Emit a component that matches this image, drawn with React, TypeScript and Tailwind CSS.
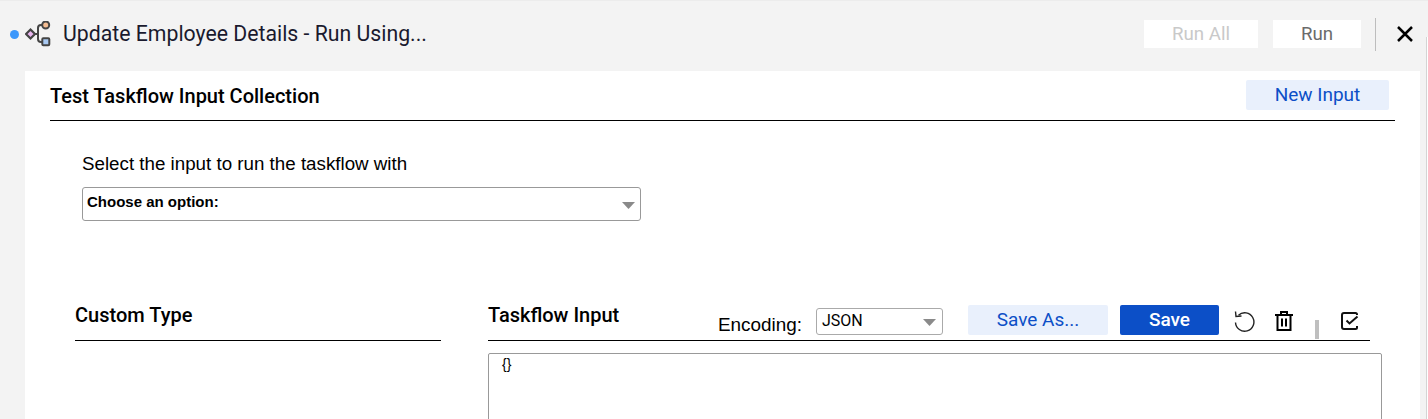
const ROBOTO = "font-['Roboto',sans-serif]"
const ARIAL = "font-['Liberation_Sans',Arial,sans-serif]"

function FlowIcon() {
  return (
    <svg width="26" height="26" viewBox="0 0 26 26" fill="none">
      <path d="M8 13h5M13 13V7q0-3 3-3h2M13 13v5q0 3 3 3h2" stroke="#444" strokeWidth="2" />
      <path d="M5.500 8.500 10 13l-4.500 4.500L1 13z" fill="#eab6f0" stroke="#444" strokeWidth="2.200" />
      <circle cx="20.700" cy="4" r="3.500" fill="#f4bd92" stroke="#444" strokeWidth="2" />
      <rect x="17.300" y="17.300" width="7" height="7" rx="1" fill="#a9c9f2" stroke="#444" strokeWidth="2" />
    </svg>
  )
}

function Caret({ className }: { className: string }) {
  return (
    <svg width="13" height="7" viewBox="0 0 13 7" className={className}>
      <path d="M0 0h13L6.500 7z" fill="#8a8a8a" />
    </svg>
  )
}

function UndoIcon() {
  return (
    <svg width="21" height="21" viewBox="0 0 21 21" fill="none" stroke="#222" strokeWidth="1.400">
      <path d="M4.500 4.200A9.200 9.200 0 1 1 1.500 11.500" />
      <path d="M1.500.5 2 5.500l5.500-.5" />
    </svg>
  )
}

function TrashIcon() {
  return (
    <svg width="18" height="20" viewBox="0 0 18 20" fill="none" stroke="#000" strokeWidth="2">
      <path d="M0 4h18M6 4V1h6v3M2.500 4v15h13V4M7 7.500v8M11 7.500v8" />
    </svg>
  )
}

function CheckBoxIcon() {
  return (
    <svg width="18" height="18" viewBox="0 0 18 18" fill="none" stroke="#111" strokeWidth="2">
      <path d="M16 3V2.500Q16 1 14.500 1H3Q1 1 1 3v12q0 2 2 2h11.500q1.500 0 1.500-1.500V14" />
      <path d="M5.500 8.500l3 3 8-7" />
    </svg>
  )
}

export default function App() {
  return (
    <div className={`relative h-[419px] w-[1428px] overflow-hidden bg-[#f3f3f3] text-black ${ROBOTO}`}>
      {/* top bar */}
      <div className="h-[71px] flex items-center border-t border-[#ececec] pb-[4px] pl-[10px] pr-[15px]">
        <span className="w-[9px] h-[9px] rounded-full bg-[#3b97fb]" />
        <span className="ml-[6px]"><FlowIcon /></span>
        <span className="ml-[12px] text-[21.250px] text-[#1a1a2e]">Update Employee Details - Run Using...</span>
        <div className="ml-auto flex items-center">
          <button className="w-[114px] h-[28px] bg-white text-[18.700px] text-[#c9c9c9]">Run All</button>
          <button className="ml-[15px] w-[88px] h-[28px] bg-white text-[18.700px] text-[#6b6b6b]">Run</button>
          <span className="ml-[14px] w-px h-[33px] bg-[#bdbdbd]" />
          <svg width="16" height="16" viewBox="0 0 16 16" className="ml-[21px]" stroke="#000" strokeWidth="2.500">
            <path d="M1 1l14 14M15 1 1 15" />
          </svg>
        </div>
      </div>

      {/* right page edge */}
      <div className="absolute right-0 top-[37px] bottom-0 w-[2px] bg-white border-l border-[#d4d4d4]" />

      {/* panel */}
      <div className="ml-[25px] w-[1395px] h-[348px] bg-white">
        <div className="mx-[25px] w-[1345px] h-[50px] flex items-center justify-between border-b border-black">
          <h2 className="text-[20px] font-medium leading-none mb-[-1px]">Test Taskflow Input Collection</h2>
          <button className="mr-[6px] mb-[2px] pt-[1px] w-[143px] h-[30px] rounded-[2px] bg-[#e9f0fc] text-[19px] text-[#0c4fc7]">New Input</button>
        </div>

        <div className={`ml-[57px] ${ARIAL}`}>
          <p className="mt-[32px] text-[18.750px] leading-[22px]">Select the input to run the taskflow with</p>
          <div className="mt-[12px] w-[559px] h-[34px] flex items-center border border-[#999] rounded-[3px] pl-[4px] pr-[5px]">
            <span className="text-[15px] font-bold mb-[3px]">Choose an option:</span>
            <Caret className="ml-auto mt-[2px]" />
          </div>
        </div>

        <div className="mt-[84px] ml-[50px] flex">
          <div className="w-[366px] h-[36px] border-b border-black">
            <h3 className="text-[20px] font-medium leading-[22px] mt-[-1px]">Custom Type</h3>
          </div>

          <div className="ml-[47px]">
            <div className="w-[882px] h-[36px] flex border-b border-black">
              <h3 className="text-[20px] font-medium leading-[22px] mt-[-1px]">Taskflow Input</h3>
              <div className="ml-auto flex items-start">
                <span className={`mt-[9px] mr-[14px] text-[18.900px] leading-[21px] ${ARIAL}`}>Encoding:</span>
                <div className="mt-[3px] w-[127px] h-[27px] flex items-center border border-[#aaa] rounded-[3px] pl-[5px] pr-[6px]">
                  <span className="text-[16px] mb-[2px]">JSON</span>
                  <Caret className="ml-auto mt-[1px]" />
                </div>
                <button className="ml-[25px] w-[140px] h-[30px] rounded-[2px] bg-[#e9f0fc] text-[19px] text-[#0c4fc7]">Save As...</button>
                <button className="ml-[12px] w-[99px] h-[30px] rounded-[2px] bg-[#0c4fc7] text-[19px] font-medium text-white">Save</button>
                <span className="ml-[15px] mt-[6px]"><UndoIcon /></span>
                <span className="ml-[20px] mt-[6px]"><TrashIcon /></span>
                <span className="ml-[22px] mt-[15px] w-[4px] h-[19px] bg-[#bfbfbf]" />
                <span className="ml-[22px] mt-[7px] mr-[11px]"><CheckBoxIcon /></span>
              </div>
            </div>
            <div className="mt-[12px] w-[894px] h-[80px] border border-[#999] rounded-[2px] pl-[13px] pt-[1px] text-[14px] leading-[18px]">
              <span className={ARIAL}>{'{}'}</span>
            </div>
          </div>
        </div>
      </div>
    </div>
  )
}
